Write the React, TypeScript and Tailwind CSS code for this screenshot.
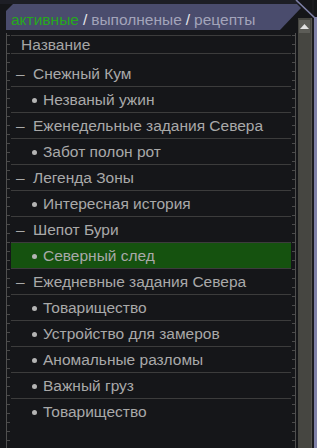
import React from 'react';

type Row = { label: string; child?: boolean; active?: boolean };

const rows: Row[] = [
  { label: 'Снежный Кум' },
  { label: 'Незваный ужин', child: true },
  { label: 'Еженедельные задания Севера' },
  { label: 'Забот полон рот', child: true },
  { label: 'Легенда Зоны' },
  { label: 'Интересная история', child: true },
  { label: 'Шепот Бури' },
  { label: 'Северный след', child: true, active: true },
  { label: 'Ежедневные задания Севера' },
  { label: 'Товарищество', child: true },
  { label: 'Устройство для замеров', child: true },
  { label: 'Аномальные разломы', child: true },
  { label: 'Важный груз', child: true },
  { label: 'Товарищество', child: true },
];

const ticks =
  'bg-[repeating-linear-gradient(to_bottom,transparent_0px,transparent_2px,#4a4a4a_2px,#4a4a4a_3px,transparent_3px,transparent_9px)]';

export default function App() {
  return (
    <div
      className="relative flex w-[317px] h-[448px] overflow-hidden bg-[#151619] text-[15.5px] text-[#a9a9a9]"
      style={{ fontFamily: '"Liberation Sans", Arial, sans-serif' }}
    >
      {/* main column */}
      <div className="flex flex-col w-[298px]">
        {/* tabs */}
        <div className="relative h-[33px] bg-[linear-gradient(to_bottom,#1d1e25_0px,#1d1e25_4px,#151619_4px)]">
          <div className="absolute left-[6px] top-[4px] w-[295px] h-[26px] bg-[#4a4c6d] [clip-path:polygon(0_7px,7px_0,291px_0,295px_4px,274px_26px,0_26px)] flex items-center pt-[5px] pl-[5px] leading-none">
            <span className="text-[#27a81d]">активные</span>
            <span className="mx-[4px] text-[#e6e6ea]">/</span>
            <span className="text-[#a3a4ba]">выполненые</span>
            <span className="mx-[4px] text-[#e6e6ea]">/</span>
            <span className="text-[#a3a4ba]">рецепты</span>
          </div>
        </div>

        {/* list */}
        <div className="flex flex-1">
          <div className="w-[6px]" />
          <div className="w-px bg-[#4f4f4f]" />
          <div className={`w-[3px] ${ticks}`} />
          <div className="w-px" />

          <div className="flex flex-col w-[280px] pt-[2px]">
            <div className="h-[19px] border-y border-[#3c3c3c] flex items-center pl-[10px] leading-none text-[#a6a6a6]">
              Название
            </div>
            <div className="flex flex-col mt-[7px]">
              {rows.map((r, i) => (
                <div
                  key={i}
                  className={`h-[26px] flex items-center leading-none ${
                    i < rows.length - 1 ? 'border-b border-[#3c3c3c]' : ''
                  } ${r.active ? 'bg-[#15520f]' : ''} ${r.child ? 'pl-[21px]' : 'pl-[5px]'}`}
                >
                  {r.child ? (
                    <span className="w-[5px] h-[5px] rounded-full bg-[#b4b4b4] mr-[6px] mt-[1px]" />
                  ) : (
                    <span className="w-[17px]">–</span>
                  )}
                  <span>{r.label}</span>
                </div>
              ))}
            </div>
          </div>

          <div className="w-px" />
          <div className={`w-[3px] ${ticks}`} />
          <div className="w-px bg-[#4f4f4f]" />
          <div className="w-[2px]" />
        </div>
      </div>

      {/* scrollbar */}
      <div className="flex flex-col w-[14px] mt-[18px] bg-[#464641] border-r border-[#55554f]">
        <div className="mt-[2px] mx-[1px] h-[13px] bg-[#5c5c57] flex items-center justify-center">
          <svg width="9" height="5" viewBox="0 0 9 5">
            <path d="M0 5 L4.5 0 L9 5 Z" fill="#e2e2e2" />
          </svg>
        </div>
      </div>

      {/* right frame */}
      <div className="w-[2px] bg-[#1b1b1f]" />
      <div className="w-[3px] mt-[17px] bg-[#8082a9]" />

      <svg className="absolute top-0 right-0" width="22" height="20" viewBox="0 0 22 20">
        <path d="M1 0 L21 19" stroke="#7e80a8" strokeWidth="1.6" />
      </svg>
    </div>
  );
}
